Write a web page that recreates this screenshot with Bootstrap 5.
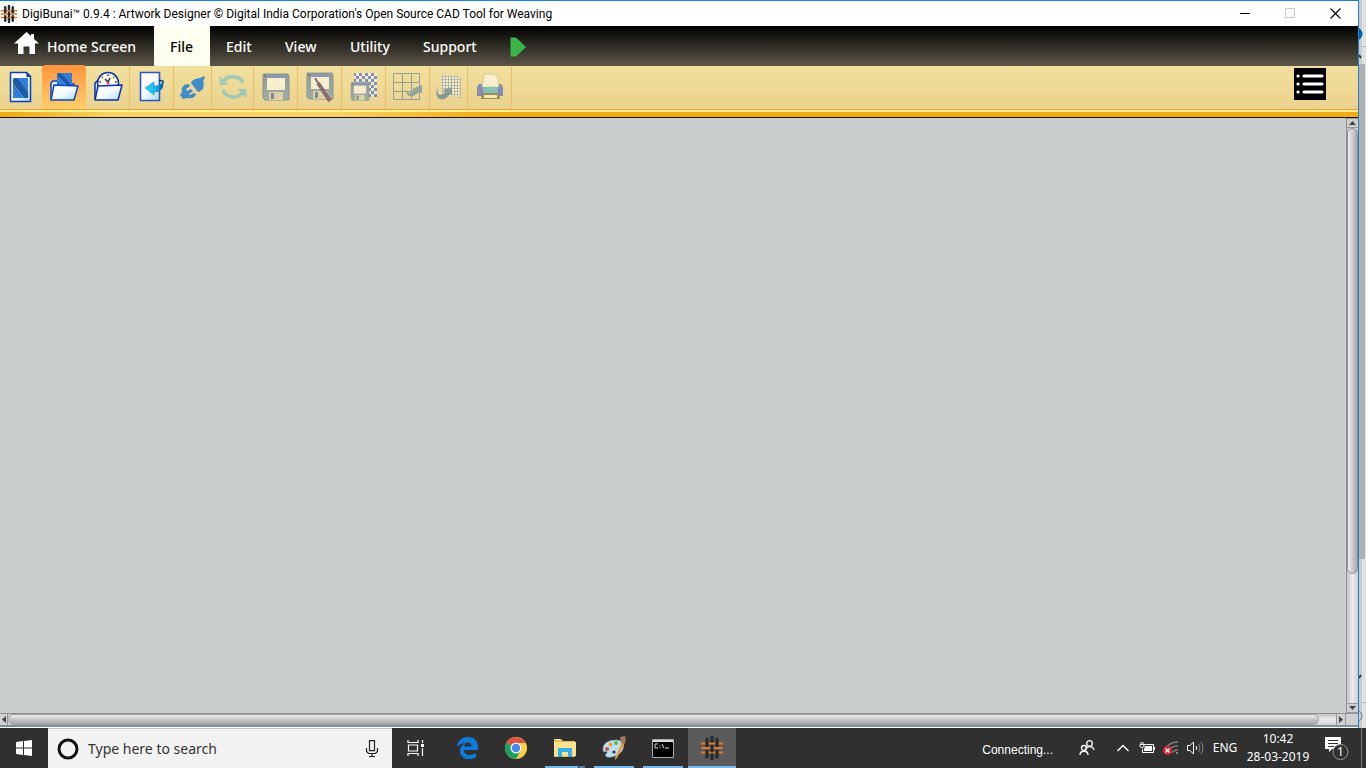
<!DOCTYPE html>
<html lang="en">
<head>
<meta charset="utf-8">
<meta name="viewport" content="width=device-width, initial-scale=1">
<title>DigiBunai Artwork Designer</title>
<link rel="stylesheet" href="https://cdn.jsdelivr.net/npm/bootstrap@5.3.0/dist/css/bootstrap.min.css">
<script src="https://cdn.jsdelivr.net/npm/bootstrap@5.3.0/dist/js/bootstrap.bundle.min.js"></script>
<style>
body { font-family: "Noto Sans", "Open Sans", sans-serif; font-size: 12px; line-height: 16px; }
svg { display: block; flex: none; }
button { border: 0; padding: 0; background: none; color: inherit; }

/* application window */
.app-window { border-top: 1px solid #1883d7; border-right: 1px solid #1883d7; background: #fff; }
.title-bar { height: 25px; color: #000; font-family: Roboto, "Noto Sans", sans-serif; font-size: 12px; }
.title-text { padding-left: 4px; }
.win-btn { width: 45px; height: 25px; }
.menu-bar { height: 40px; background: linear-gradient(#000, #5c5748); }
.menu-link { height: 40px; padding: 2px 16px 0; color: #fff; font-size: 14px; font-weight: 500; line-height: 20px; text-decoration: none; }
.menu-link.active { background: #fffff0; color: #000; }
.menu-home { width: 154px; padding: 2px 0 0 14px; gap: 8px; }
.w-file { width: 56px; } .w-edit { width: 59px; } .w-view { width: 65px; } .w-util { width: 73px; } .w-supp { width: 87px; }
.tool-bar { height: 43px; background: linear-gradient(#f3e09e, #e9d28d); }
.tool-btn { width: 44px; height: 43px; padding-bottom: 2px; border-right: 1px solid #e8bd6b; }
.tool-btn.slim { width: 42px; }
.tool-btn.tight { width: 38px; }
.tool-btn:disabled svg { opacity: .6; }
.tool-btn.hot { height: 45px; margin-top: -1px; border: 0; border-radius: 4px; background: linear-gradient(#ff943c, #ffd069); }
.tool-list { padding: 2px 32px 0 0; }
.gold-rule { height: 9px; border-top: 1px solid #e9a04b; border-bottom: 1px solid #1c1505; background: linear-gradient(90deg, #f0a80f, #f7d260 8%, #f7d260 25%, #f0ac15 36%, #f0ac15); }
.gold-rule::before { content: ""; display: block; height: 2px; background: #fff08c; }
.canvas-area { background: #c9cfce; }

/* scroll bars */
.vbar { width: 12px; border-left: 1px solid #909090; background: linear-gradient(90deg, #c4c4c4, #ececec 50%, #cfcfcf); }
.hbar { height: 12px; border-top: 1px solid #909090; background: linear-gradient(#c4c4c4, #ececec 50%, #cfcfcf); }
.vbar button { height: 10px; background: #cfcfcf; border: solid #999; border-width: 1px 0; }
.hbar button { width: 10px; background: #cfcfcf; border: solid #999; border-width: 0 1px; }
.hbar .arrow-left { width: 8px; border-left: 0; }
.v-thumb { flex: 446 1 0; border: 1px solid #8d8d8d; border-radius: 6px; background: linear-gradient(90deg, #f0f0f0, #ccc 50%, #a9a9a9); }
.v-rest { flex: 129 1 0; }
.h-thumb { flex: 1311 1 0; border: 1px solid #a0a0a0; border-radius: 6px; background: linear-gradient(#efefef, #c6c6c6 50%, #a6a6a6); }
.h-rest { flex: 17 1 0; }
.corner { width: 12px; background: #d0d0d0; }
.win-foot { height: 3px; background: #8190a0; border-bottom: 1px solid #fff; }
.back-strip { width: 7px; background: #e1e1e1; }

/* taskbar */
.task-bar { height: 40px; background: #303030; color: #fff; }
.start-btn, .task-btn { width: 48px; height: 40px; }
.search-box { width: 344px; padding: 0 13px 0 8px; background: #f2f2f2; border-top: 1px solid #c3bfc4; }
.search-box input { border: 0; outline: 0; background: none; font-size: 14px; line-height: 20px; color: #333; padding: 0; min-width: 0; }
.search-box input::placeholder { color: #333; opacity: 1; }
.task-apps { gap: 1px; margin-left: 3px; }
.task-btn.running { background: linear-gradient(#76b9ed, #76b9ed) bottom / 40px 2px no-repeat; }
.task-btn.stacked { background: linear-gradient(90deg, #76b9ed 33px, #303030 33px, #303030 34px, #4f7ea3 34px) bottom / 40px 2px no-repeat; }
.task-btn.current { background: #5b5b5b; box-shadow: inset 0 -2px #76b9ed; }
.net-state { font-family: "Liberation Sans", sans-serif; padding: 3px 10px 0 0; }
.tray-cell { width: 24px; height: 40px; }
.tray-cell.wide { width: 48px; }
.tray-cell.lang { width: 36px; }
.clock { width: 70px; line-height: 18px; font-size: 12px; }
.desk-edge { width: 5px; height: 40px; border-left: 1px solid #777; }
</style>
</head>
<body class="vh-100 d-flex flex-column overflow-hidden">

<svg width="0" height="0" class="position-absolute" aria-hidden="true">
  <defs>
    <pattern id="cloth" width="3" height="3" patternUnits="userSpaceOnUse" patternTransform="rotate(-35)"><rect width="3" height="3" fill="#3f8ce0"/><rect width="1.200" height="3" fill="#2468c4"/></pattern>
    <pattern id="check" width="6" height="6" patternUnits="userSpaceOnUse"><rect width="6" height="6" fill="#3a5fc8"/><path d="M0 0h3v3H0zM3 3h3v3H3z" fill="#f4f4f0"/></pattern>
    <pattern id="mesh" width="3" height="3" patternUnits="userSpaceOnUse"><rect width="3" height="3" fill="#f8f8f0"/><path d="M0 0h3M0 0v3" stroke="#7f8f9c" stroke-width="1.600"/></pattern>
    <linearGradient id="paper" x2="1" y2="1"><stop stop-color="#fff"/><stop offset=".5" stop-color="#f4faff"/><stop offset="1" stop-color="#a9dcfa"/></linearGradient>
    <linearGradient id="steel" x2="0" y2="1"><stop stop-color="#4d6ea0"/><stop offset="1" stop-color="#6f94b4"/></linearGradient>
    <linearGradient id="cyan"><stop stop-color="#35d4f4"/><stop offset=".6" stop-color="#19b5ee"/><stop offset="1" stop-color="#084a9b"/></linearGradient>
    <symbol id="weave" viewBox="0 0 24 24">
      <path d="M1 7.500h22M1 12h22M1 16.500h22" stroke="#e07a28" stroke-width="2"/>
      <path d="M7 3v6M7 15v6M12 1v4M12 10v5M12 19v4M17 3v6M17 15v6" stroke="#2b2929" stroke-width="3.200" stroke-linecap="round"/>
      <path d="M7 9v2M17 9v2M12 5v1M12 18v2" stroke="#2b2929" stroke-width="3.200"/>
    </symbol>
    <symbol id="floppy" viewBox="0 0 28 28"><path d="M1 1h25l1 2v24H3l-2-2z" fill="url(#steel)" stroke="#4c6684"/><path d="M5 5h18v12H5z" fill="#fffdf0"/><path d="M5 2h18v3H5z" fill="#4a6cc8"/><path d="M7 19h14v8H7z" fill="#d5cdb2"/><path d="M9 20h3v6H9z" fill="#36548c"/><path d="M2 2h2v2H2z" fill="#443e2f"/></symbol>
  </defs>
</svg>

<div class="d-flex flex-grow-1 overflow-hidden">
  <main class="app-window d-flex flex-column flex-grow-1">
    <header class="title-bar d-flex align-items-center">
      <svg width="18" height="18"><use href="#weave"/></svg>
      <span class="title-text flex-grow-1 text-nowrap">DigiBunai™ 0.9.4 : Artwork Designer © Digital India Corporation's Open Source CAD Tool for Weaving</span>
      <button class="win-btn" aria-label="Minimize"><svg class="mx-auto" width="12" height="11"><path d="M0 5.500h10" stroke="#000"/></svg></button>
      <button class="win-btn" aria-label="Maximize" disabled><svg class="mx-auto" width="12" height="11"><path d="M.5.5h9v9h-9z" fill="none" stroke="#ccc"/></svg></button>
      <button class="win-btn" aria-label="Close"><svg class="mx-auto" width="12" height="11"><path d="M.5.500l10 10M10.500.500l-10 10" stroke="#000" stroke-width="1.200"/></svg></button>
    </header>

    <nav class="menu-bar d-flex" aria-label="Main menu">
      <a href="#" class="menu-link menu-home d-flex align-items-center"><svg class="mb-2" width="25" height="24"><path d="M12.500 1L0 12.500h4V23h5.500v-7.500h6V23H21V12.500h4L20 8V3h-3v2z" fill="#fff"/></svg><span class="text-nowrap">Home Screen</span></a>
      <a href="#" class="menu-link w-file active d-flex align-items-center" aria-current="page">File</a>
      <a href="#" class="menu-link w-edit d-flex align-items-center">Edit</a>
      <a href="#" class="menu-link w-view d-flex align-items-center">View</a>
      <a href="#" class="menu-link w-util d-flex align-items-center">Utility</a>
      <a href="#" class="menu-link w-supp d-flex align-items-center">Support</a>
      <a href="#" class="menu-link d-flex align-items-center" aria-label="Run"><svg width="17" height="20"><path d="M.5.500H6L16 10 6 19.500H.5z" fill="#3bb54a"/></svg></a>
    </nav>

    <div class="tool-bar d-flex" role="toolbar" aria-label="File tools">
      <button class="tool-btn slim d-flex align-items-center justify-content-center border-0" aria-label="New"><svg width="25" height="32"><path d="M1.500 1.500h16l4 4v25h-20z" fill="url(#paper)" stroke="#0b3fc4" stroke-width="1.500"/><path d="M17.500 1l5 5h-5z" fill="#0a39a8"/><path d="M4 7h15v20H4z" fill="url(#cloth)"/><path d="M4 9l4-2 11 15v5h-3L4 12z" fill="#123f83" opacity=".6"/></svg></button>
      <button class="tool-btn hot d-flex align-items-center justify-content-center" aria-label="Open"><svg width="30" height="32"><path d="M2 28V12l2-2h6l2 3h13v3" fill="#d5ecfc" stroke="#0b47c4" stroke-width="1.500"/><path d="M8 2h15v14H8z" fill="url(#cloth)"/><path d="M8 4l3-2 12 12v2h-3z" fill="#123f83" opacity=".6"/><path d="M5 14l24 1-4 14H2z" fill="url(#paper)" stroke="#0b47c4" stroke-width="1.500" stroke-linejoin="round"/></svg></button>
      <button class="tool-btn d-flex align-items-center justify-content-center" aria-label="Open recent"><svg width="30" height="32"><path d="M2 28V12l2-2h4v6h16" fill="#d5ecfc" stroke="#0b2fb4" stroke-width="1.500"/><circle cx="15" cy="12" r="10.500" fill="#fff" stroke="#123b9f" stroke-width="1.600"/><path d="M15 3.500v1.500M9 6l.8.8M21 6l-.8.8M6.500 11H8M22 11h1.500M12 8l3 3 2-4" fill="none" stroke="#222" stroke-width="1.400"/><circle cx="15" cy="12" r="1.500" fill="#e44"/><path d="M5 15l24-1-4 15H2z" fill="url(#paper)" stroke="#0b2fb4" stroke-width="1.500" stroke-linejoin="round"/></svg></button>
      <button class="tool-btn d-flex align-items-center justify-content-center" aria-label="Import"><svg width="26" height="32"><path d="M1.500 1.500h19v28h-19z" fill="url(#paper)" stroke="#2c53c8" stroke-width="1.600"/><path d="M6 17l9-6v4c5 0 8-2 9-5v5c-1 4-4 6-9 6v3z" fill="url(#cyan)" stroke="#108fcb" stroke-width=".6"/><path d="M20 10c3-1 5 0 4 2" fill="none" stroke="#084a7b" stroke-width="1.500"/></svg></button>
      <button class="tool-btn tight d-flex align-items-center justify-content-center" aria-label="Connect"><svg width="26" height="24" fill="#408ccb"><path d="M0 20l2-3c-1-4 1-7 5-8l3 1-1 2-3 2 1 2 4-2 2 2-4 3 1 1 4-2 2 1c-1 4-5 5-9 4l-4 1zM12 6l3-2 5-1 2-1 3-1-1 4-1 1 1 3-1 5-4 3-2-1-6-8z"/></svg></button>
      <button class="tool-btn slim d-flex align-items-center justify-content-center" aria-label="Refresh" disabled><svg width="30" height="28" fill="none" stroke="#6dbfd0" stroke-width="3.600"><path d="M5 9A11 10 0 0 1 25 10M25 19A11 10 0 0 1 5 17"/><path d="M1 3l1 9h9zM29 25l-1-9h-9z" fill="#6dbfd0" stroke="none"/></svg></button>
      <button class="tool-btn d-flex align-items-center justify-content-center" aria-label="Save" disabled><svg width="28" height="28"><use href="#floppy"/></svg></button>
      <button class="tool-btn d-flex align-items-center justify-content-center" aria-label="Save as" disabled><svg width="28" height="30"><use href="#floppy" width="28" height="28"/><path d="M9 6l3 5" stroke="#4b2458" stroke-width="2"/><path d="M12 11l12 18" stroke="#4b2458" stroke-width="4"/></svg></button>
      <button class="tool-btn d-flex align-items-center justify-content-center" aria-label="Save texture" disabled><svg width="28" height="28"><path d="M4 0h23v24H4z" fill="url(#check)"/><use href="#floppy" y="9" width="20" height="19"/></svg></button>
      <button class="tool-btn d-flex align-items-center justify-content-center" aria-label="Export grid" disabled><svg width="29" height="28"><path d="M.5.500h26v26H.5zM9.500 0v27M18.500 0v27M0 9.500h27M0 18.500h27" fill="none" stroke="#5d7992"/><path d="M14 16c0 5 4 5 7 2l-2-2 10-4v8l-3-1c-5 6-14 6-12-3z" fill="#5484a4"/></svg></button>
      <button class="tool-btn tight d-flex align-items-center justify-content-center" aria-label="Export cloth" disabled><svg width="26" height="28"><path d="M5 1c6 3 12 0 20 3v21l-20-3z" fill="url(#mesh)"/><path d="M2 13c-2 8 2 12 7 6l-2-2 9-3v8l-2-1C9 30-4 28 2 13z" fill="#417599"/></svg></button>
      <button class="tool-btn d-flex align-items-center justify-content-center" aria-label="Print" disabled><svg width="28" height="28"><path d="M3 11h3v3h16v-3h3l2 3v9H1v-9z" fill="#4258c8"/><path d="M6 14L8 1h10l4 4 1 9z" fill="#fffdf0" stroke="#a39d84" stroke-width=".6"/><path d="M7 14h15v6H7z" fill="#45b3c8"/><path d="M6 20h17l1 6H5z" fill="#665b39"/><path d="M8 22h13v3H8z" fill="#fff4cc"/><circle cx="3.500" cy="18" r="1" fill="#f44"/></svg></button>
      <div class="tool-list ms-auto"><button aria-label="Options"><svg width="32" height="32"><path d="M0 0h32v32H0z"/><path d="M10 8h18M10 16h18M10 24h18M4 8h.1M4 16h.1M4 24h.1" stroke="#fff" stroke-width="3.200" stroke-linecap="round"/></svg></button></div>
    </div>
    <div class="gold-rule"></div>

    <div class="d-flex flex-grow-1">
      <section class="canvas-area flex-grow-1" aria-label="Artwork canvas"></section>
      <div class="vbar d-flex flex-column">
        <button aria-label="Scroll up"><svg class="mx-auto" width="7" height="4"><path d="M0 4l3.500-4L7 4z" fill="#444"/></svg></button>
        <div class="v-thumb"></div><div class="v-rest"></div>
        <button aria-label="Scroll down"><svg class="mx-auto" width="7" height="4"><path d="M0 0l3.500 4L7 0z" fill="#444"/></svg></button>
      </div>
    </div>
    <div class="hbar d-flex align-items-stretch">
      <button class="arrow-left" aria-label="Scroll left"><svg class="mx-auto" width="4" height="7"><path d="M4 0L0 3.500 4 7z" fill="#444"/></svg></button>
      <div class="h-thumb"></div><div class="h-rest"></div>
      <button aria-label="Scroll right"><svg class="mx-auto" width="4" height="7"><path d="M0 0l4 3.500L0 7z" fill="#444"/></svg></button>
      <div class="corner"></div>
    </div>
    <div class="win-foot"></div>
  </main>
  <aside class="back-strip" aria-hidden="true">
    <svg class="w-100 h-100" viewBox="0 0 7 728" preserveAspectRatio="none"><path d="M0 0h3v728H0z" fill="#cbcbcb"/><circle cx="-3" cy="34" r="6.500" fill="#0063b1"/><path d="M0 46.500h7M0 702.500h7" stroke="#bbb"/><path d="M0 64h6v495H0z" fill="#b0b0b0"/><path d="M0 55l2 3M0 678l2-3" stroke="#333" stroke-width="2"/><circle cx="-3" cy="716" r="6" fill="none" stroke="#777"/></svg>
  </aside>
</div>

<footer class="task-bar d-flex">
  <button class="start-btn" aria-label="Start"><svg class="mx-auto" width="16" height="16" fill="#fff"><path d="M0 2l7-1v6.500H0zM8 1l8-1v7.500H8zM0 8.500h7V15l-7-1zM8 8.500h8V16l-8-1z"/></svg></button>
  <div class="search-box d-flex align-items-center">
    <svg width="24" height="24"><circle cx="12" cy="12" r="9" fill="none" stroke="#111" stroke-width="3"/></svg>
    <input class="flex-grow-1 ms-2" type="text" placeholder="Type here to search" aria-label="Type here to search">
    <button aria-label="Voice search"><svg width="14" height="18" fill="none" stroke="#222" stroke-width="1.200"><path d="M4.500.6h5v10h-5zM1.500 8v3.500l2 2h7l2-2V8M7 13.500v3M4 16.500h6"/></svg></button>
  </div>
  <button class="task-btn" aria-label="Task view"><svg class="mx-auto" width="18" height="16" fill="none" stroke="#fff" stroke-width="1.200"><path d="M1 0v2.500h10V0M1 16v-2.500h10V16M1.500 5h9v6h-9zM15.500 0v3M15.500 8v8"/><path d="M14 4h3v3h-3z" fill="#fff" stroke="none"/></svg></button>
  <div class="task-apps d-flex">
    <button class="task-btn" aria-label="Edge"><svg class="mx-auto" width="21" height="22"><path d="M0 9.500C1 3 5.500 0 11 0c6 0 10 4 10 10v3H7c0 6 7 6 12 3v4.500C12 24 2 22 3 12.500 4 9 6 7 9 6 6 6 3 7 0 9.500zM7 9.500h7.500C14.500 4 7.500 4.500 7 9.500z" fill="#0d7bdb"/></svg></button>
    <button class="task-btn" aria-label="Chrome"><svg class="mx-auto" width="22" height="22"><circle cx="11" cy="11" r="11" fill="#fdce42"/><path d="M11 11L1.500 5.500A11 11 0 0 0 11 22l4.500-8z" fill="#1aa15f"/><path d="M11 11L1.500 5.500A11 11 0 0 1 20.500 6H11z" fill="#de4f43"/><circle cx="11" cy="11" r="5.500" fill="#f4f4f4"/><circle cx="11" cy="11" r="4.200" fill="#4a86f2"/></svg></button>
    <button class="task-btn stacked" aria-label="File Explorer"><svg class="mx-auto" width="22" height="20"><path d="M0 1h7l2 2h12v16H0z" fill="#e9bd57"/><path d="M0 4h22v14H0z" fill="#fbe190"/><path d="M4 10h14v9h-4v-5H8v5H4z" fill="#34b0e8"/><path d="M2 1h4v1H2z" fill="#fff"/></svg></button>
    <button class="task-btn running" aria-label="Paint"><svg class="mx-auto" width="24" height="24"><path d="M1 13C1 7 7 4 14 4c8 0 9 6 6 11-3 4-10 7-15 6-2-1-2-3 0-4 1-1-1-2-2-1-2 0-2-2-2-3z" fill="#bcdff2" stroke="#76a8c5" stroke-width=".6"/><circle cx="5" cy="13" r="2" fill="#de493c"/><circle cx="8.500" cy="8.500" r="2" fill="#f29b26"/><circle cx="14" cy="7" r="2" fill="#64b93c"/><circle cx="12" cy="16" r="1.600" fill="#333"/><path d="M13 22l7-16 3 1-8 15-2 2z" fill="#ee9937"/><path d="M18 1l5-1 1 4-2 4-3-1z" fill="#a87753"/></svg></button>
    <button class="task-btn running" aria-label="Command Prompt"><svg class="mx-auto" width="22" height="19"><path d="M.5.500h21v18H.5z" stroke="#aaa"/><path d="M1 1h20v2H1z" fill="#ddd"/><path d="M6 5H3v4h3M8 6v1M8 8v1M10 5l2 4M13 9h4" fill="none" stroke="#ddd"/></svg></button>
    <button class="task-btn current" aria-label="DigiBunai"><svg class="mx-auto" width="24" height="24"><use href="#weave"/></svg></button>
  </div>
  <div class="d-flex align-items-center ms-auto">
    <span class="net-state">Connecting...</span>
    <button class="tray-cell wide" aria-label="People"><svg class="mx-auto" width="16" height="16" fill="none" stroke="#fff" stroke-width="1.300"><circle cx="10.500" cy="3.500" r="2.800"/><path d="M6 10c2-4.500 8-4.500 9 0"/><circle cx="5" cy="8" r="2.500"/><path d="M1 15c0-5 8-5 8 0"/></svg></button>
    <button class="tray-cell" aria-label="Show hidden icons"><svg class="mx-auto" width="12" height="8" fill="none" stroke="#fff" stroke-width="1.400"><path d="M.5 7L6 1.500 11.500 7"/></svg></button>
    <button class="tray-cell" aria-label="Battery"><svg class="mx-auto" width="16" height="12" fill="none" stroke="#fff"><path d="M5 2.500h9.500v8h-11V7M15.500 5v3M1 2.500h4v2L3 6 1 4.500zM2 0v2M4 0v2"/><path d="M6 4h7v5H5V7z" fill="#fff" stroke="none"/></svg></button>
    <button class="tray-cell" aria-label="Network"><svg class="mx-auto" width="16" height="14" fill="none" stroke="#7c7c7c" stroke-width="1.300"><path d="M2 9C4 4 9 1 15 1M5 11c1-4 5-6 10-6M9 12c1-2 3-3 6-3"/><path d="M13 11h2v2h-2z" fill="#888" stroke="none"/><circle cx="4.500" cy="9.500" r="4.500" fill="#dc2431" stroke="none"/><path d="M2.500 7.500l4 4M6.500 7.500l-4 4" stroke="#fff"/></svg></button>
    <button class="tray-cell" aria-label="Volume"><svg class="mx-auto" width="17" height="14" fill="none" stroke="#fff"><path d="M.5 4.500H3l3.500-3.500v12L3 9.500H.5z"/><path d="M9 5q1.500 2 0 4" /><path d="M11.500 3q3 4 0 8M14 1q4 6 0 12" stroke="#888"/></svg></button>
    <button class="tray-cell lang">ENG</button>
    <div class="clock text-center"><div>10:42</div><div>28-03-2019</div></div>
    <button class="tray-cell wide" aria-label="1 notification"><svg class="mx-auto" width="24" height="24"><path d="M0 1h16v12H7l-3 3v-3H0z" fill="#fff"/><path d="M3 4.500h10M3 7.500h10M3 10.500h6" stroke="#303030"/><circle cx="15.500" cy="16" r="7.500" fill="#303030" stroke="#999"/><text x="15.500" y="20" text-anchor="middle" font-size="12" fill="#fff">1</text></svg></button>
    <div class="desk-edge"></div>
  </div>
</footer>
</body>
</html>
